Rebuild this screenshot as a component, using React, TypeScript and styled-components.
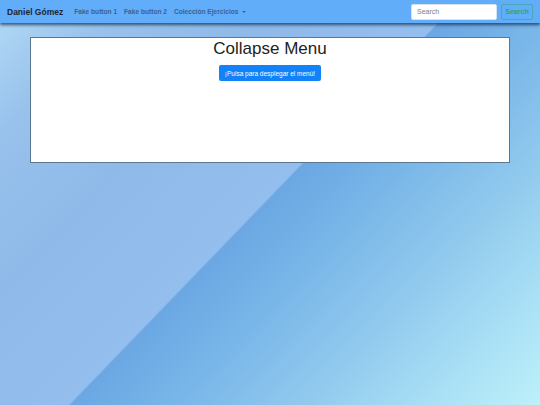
import React from "react";
import styled, { createGlobalStyle } from "styled-components";

const GlobalStyle = createGlobalStyle`
  html, body {
    margin: 0;
    padding: 0;
    height: 100%;
  }
  body {
    font-family: "Liberation Sans", Arial, sans-serif;
    background: linear-gradient(
      134deg,
      #b3daf5 0%,
      #98c2ec 14%,
      #8fb9e8 30%,
      #93beee 49.3%,
      #6ba7e3 49.6%,
      #78b5e8 60%,
      #92caee 75%,
      #a9e0f5 88%,
      #bdf0fa 100%
    );
  }
  #root {
    min-height: 405px;
  }
`;

const Navbar = styled.nav`
  display: flex;
  align-items: center;
  justify-content: space-between;
  height: 23px;
  padding: 0 7px;
  background: #62adf9;
  box-shadow: 0 2px 3px rgba(20, 40, 70, 0.75);
  position: relative;
  z-index: 1;
`;

const Left = styled.div`
  display: flex;
  align-items: center;
`;

const Brand = styled.a`
  font-size: 8.5px;
  font-weight: bold;
  color: #1b2635;
  margin-right: 11px;
  text-decoration: none;
`;

const NavLink = styled.a`
  font-size: 6.6px;
  font-weight: bold;
  color: #3a638c;
  margin-right: 7px;
  text-decoration: none;
  display: flex;
  align-items: center;
`;

const Caret = styled.span`
  display: inline-block;
  margin-left: 4px;
  border-top: 2.5px solid #3a638c;
  border-left: 2px solid transparent;
  border-right: 2px solid transparent;
`;

const SearchForm = styled.form`
  display: flex;
  align-items: center;
  gap: 4px;
`;

const SearchInput = styled.input`
  width: 86px;
  height: 16px;
  box-sizing: border-box;
  border: 1px solid #d6e2ee;
  border-radius: 2px;
  padding: 0 5px;
  font-size: 7px;
  font-family: "Liberation Sans", Arial, sans-serif;
  background: #fff;
  outline: none;
  &::placeholder {
    color: #7a8088;
  }
`;

const SearchButton = styled.button`
  width: 32px;
  height: 16px;
  box-sizing: border-box;
  border: 1px solid rgba(40, 167, 90, 0.45);
  border-radius: 2px;
  background: transparent;
  color: #2fa56a;
  font-size: 7px;
  font-weight: bold;
  font-family: "Liberation Sans", Arial, sans-serif;
  padding: 0;
`;

const Main = styled.main`
  padding: 14px 30px 0 30px;
`;

const Panel = styled.section`
  height: 126px;
  box-sizing: border-box;
  background: #fff;
  border: 1px solid #5c7890;
  display: flex;
  flex-direction: column;
  align-items: center;
`;

const Title = styled.h1`
  margin: 1px 0 0 0;
  font-size: 17px;
  font-weight: normal;
  color: #222;
  line-height: 20px;
`;

const PrimaryButton = styled.button`
  margin-top: 6px;
  height: 16px;
  padding: 0 6px;
  border: none;
  border-radius: 2px;
  background: #1282f8;
  color: #fff;
  font-size: 6.5px;
  font-family: "Liberation Sans", Arial, sans-serif;
`;

export default function App() {
  return (
    <>
      <GlobalStyle />
      <Navbar>
        <Left>
          <Brand href="#">Daniel Gómez</Brand>
          <NavLink href="#">Fake button 1</NavLink>
          <NavLink href="#">Fake button 2</NavLink>
          <NavLink href="#">
            Colección Ejercicios
            <Caret />
          </NavLink>
        </Left>
        <SearchForm onSubmit={(e) => e.preventDefault()}>
          <SearchInput placeholder="Search" />
          <SearchButton type="submit">Search</SearchButton>
        </SearchForm>
      </Navbar>
      <Main>
        <Panel>
          <Title>Collapse Menu</Title>
          <PrimaryButton>¡Pulsa para desplegar el menú!</PrimaryButton>
        </Panel>
      </Main>
    </>
  );
}
